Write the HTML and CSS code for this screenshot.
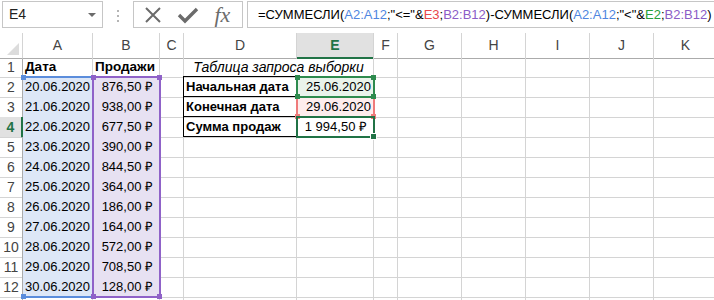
FILE: index.html
```html
<!DOCTYPE html>
<html>
<head>
	<meta charset="utf-8">
	<title>СУММЕСЛИ по датам</title>
	<link rel="stylesheet" href="styles.css">
</head>
<body>
	<div class="fbar">
		<div class="namebox">E4<span class="drop"></span></div>
		<div class="dots"><i></i><i></i><i></i></div>
		<div class="btns">
			<svg width="18" height="18" viewBox="0 0 18 18"><path d="M2 2 L16 16 M16 2 L2 16" stroke="#6b6b6b" stroke-width="2" fill="none"/></svg>
			<svg width="22" height="18" viewBox="0 0 22 18"><path d="M2 9 L8 15 L20 3" stroke="#6b6b6b" stroke-width="3.4" fill="none"/></svg>
			<span class="fx">fx</span>
		</div>
		<div class="formula">=СУММЕСЛИ(<span class="rb">A2:A12</span>;"&lt;="&amp;<span class="rr">E3</span>;<span class="rp">B2:B12</span>)-СУММЕСЛИ(<span class="rb">A2:A12</span>;"&lt;"&amp;<span class="rg">E2</span>;<span class="rp">B2:B12</span>)</div>
	</div>

	<div class="sheet">
		<div class="row head">
			<div class="corner"></div>
			<div>A</div><div>B</div><div>C</div><div>D</div><div class="sel">E</div><div>F</div><div>G</div><div>H</div><div>I</div><div>J</div><div>K</div>
		</div>
		<div class="row">
			<div class="rh">1</div><div class="b">Дата</div><div class="b">Продажи</div><div></div><div class="title">Таблица запроса выборки</div><div></div><div></div><div></div><div></div><div></div><div></div>
		</div>
		<div class="row">
			<div class="rh">2</div><div class="num fa">20.06.2020</div><div class="num fb cur">876,50 ₽</div><div></div><div class="lbl">Начальная дата</div><div class="num fe2 val">25.06.2020</div><div></div><div></div><div></div><div></div><div></div><div></div>
		</div>
		<div class="row">
			<div class="rh">3</div><div class="num fa">21.06.2020</div><div class="num fb cur">938,00 ₽</div><div></div><div class="lbl">Конечная дата</div><div class="num fe3 val">29.06.2020</div><div></div><div></div><div></div><div></div><div></div><div></div>
		</div>
		<div class="row">
			<div class="rh sel">4</div><div class="num fa">22.06.2020</div><div class="num fb cur">677,50 ₽</div><div></div><div class="lbl">Сумма продаж</div><div class="num cur val">1 994,50 ₽</div><div></div><div></div><div></div><div></div><div></div><div></div>
		</div>
		<div class="row">
			<div class="rh">5</div><div class="num fa">23.06.2020</div><div class="num fb cur">390,00 ₽</div><div></div><div></div><div></div><div></div><div></div><div></div><div></div><div></div><div></div>
		</div>
		<div class="row">
			<div class="rh">6</div><div class="num fa">24.06.2020</div><div class="num fb cur">844,50 ₽</div><div></div><div></div><div></div><div></div><div></div><div></div><div></div><div></div><div></div>
		</div>
		<div class="row">
			<div class="rh">7</div><div class="num fa">25.06.2020</div><div class="num fb cur">364,00 ₽</div><div></div><div></div><div></div><div></div><div></div><div></div><div></div><div></div><div></div>
		</div>
		<div class="row">
			<div class="rh">8</div><div class="num fa">26.06.2020</div><div class="num fb cur">186,00 ₽</div><div></div><div></div><div></div><div></div><div></div><div></div><div></div><div></div><div></div>
		</div>
		<div class="row">
			<div class="rh">9</div><div class="num fa">27.06.2020</div><div class="num fb cur">164,00 ₽</div><div></div><div></div><div></div><div></div><div></div><div></div><div></div><div></div><div></div>
		</div>
		<div class="row">
			<div class="rh">10</div><div class="num fa">28.06.2020</div><div class="num fb cur">572,00 ₽</div><div></div><div></div><div></div><div></div><div></div><div></div><div></div><div></div><div></div>
		</div>
		<div class="row">
			<div class="rh">11</div><div class="num fa">29.06.2020</div><div class="num fb cur">708,50 ₽</div><div></div><div></div><div></div><div></div><div></div><div></div><div></div><div></div><div></div>
		</div>
		<div class="row">
			<div class="rh">12</div><div class="num fa">30.06.2020</div><div class="num fb cur">128,00 ₽</div><div></div><div></div><div></div><div></div><div></div><div></div><div></div><div></div><div></div>
		</div>
		<div class="row">
			<div class="rh"></div><div></div><div></div><div></div><div></div><div></div><div></div><div></div><div></div><div></div><div></div><div></div>
		</div>

		<!-- range highlights drawn over the grid -->
		<div class="tbl"></div>
		<div class="rng blue"><i class="h tl"></i><i class="h bl"></i></div>
		<div class="rng purple"><i class="h tl"></i><i class="h tr"></i><i class="h bl"></i><i class="h br"></i></div>
		<div class="rng red"><i class="h bl"></i><i class="h br"></i></div>
		<div class="rng green"><i class="h tl"></i><i class="h tr"></i><i class="h bl"></i><i class="h br"></i></div>
		<div class="active"><i class="fill"></i></div>
	</div>
</body>
</html>
```

FILE: styles.css
```css
body {
	margin: 0;
	background: #fff;
	font-family: "Liberation Sans", Arial, sans-serif;
	color: #000;
	overflow: hidden;
	width: 714px;
	height: 300px;
}

/* formula bar */
.fbar {
	display: flex;
	align-items: flex-start;
	height: 33px;
	padding-top: 1px;
	box-sizing: border-box;
}
.namebox {
	position: relative;
	margin-left: 2px;
	width: 101px;
	height: 27px;
	box-sizing: border-box;
	border: 1px solid #c6c6c6;
	font-size: 14px;
	line-height: 25px;
	padding-left: 6px;
	color: #222;
}
.drop {
	position: absolute;
	right: 6px;
	top: 11px;
	border-left: 4px solid transparent;
	border-right: 4px solid transparent;
	border-top: 4px solid #6b6b6b;
}
.dots {
	width: 30px;
	display: flex;
	flex-direction: column;
	align-items: center;
	gap: 3px;
	padding-top: 9px;
}
.dots i {
	width: 2px;
	height: 2px;
	background: #b5b5b5;
}
.btns {
	width: 110px;
	height: 27px;
	box-sizing: border-box;
	border: 1px solid #c6c6c6;
	display: flex;
	align-items: center;
	justify-content: space-around;
	padding: 0 4px 0 2px;
}
.fx {
	font-family: "Liberation Serif", serif;
	font-style: italic;
	font-size: 22px;
	color: #6b6b6b;
	line-height: 24px;
}
.formula {
	margin-left: 4px;
	flex: 1;
	height: 27px;
	box-sizing: border-box;
	border: 1px solid #c6c6c6;
	border-right: none;
	font-size: 13px;
	line-height: 25px;
	padding-left: 10px;
	white-space: nowrap;
	overflow: hidden;
}
.rb { color: #4f86e0; }
.rr { color: #e8474a; }
.rp { color: #8b5cc7; }
.rg { color: #26a03a; }

/* grid */
.sheet {
	position: relative;
}
.row {
	display: grid;
	grid-template-columns: 23px 70px 67px 24px 113px 77px 24px 64px 64px 64px 64px 64px;
	height: 20px;
}
.row > div {
	box-sizing: border-box;
	border-right: 1px solid #d4d4d4;
	border-bottom: 1px solid #d4d4d4;
	font-size: 13px;
	line-height: 20px;
	padding: 0 2px;
	white-space: nowrap;
}
.row.head {
	height: 24px;
}
.row.head > div {
	border-bottom-color: #ababab;
	text-align: center;
	line-height: 24px;
	color: #444;
	font-size: 14px;
}
.row .rh {
	border-right-color: #ababab;
	text-align: center;
	color: #444;
	font-size: 14px;
	padding: 0;
}
.row.head > .sel {
	background: #e1e1e1;
	color: #217346;
	font-weight: bold;
	border-bottom: 2px solid #217346;
}
.row .rh.sel {
	background: #e1e1e1;
	color: #217346;
	font-weight: bold;
	border-right: 2px solid #217346;
}
.corner {
	position: relative;
}
.corner::after {
	content: "";
	position: absolute;
	right: 3px;
	bottom: 3px;
	border-left: 12px solid transparent;
	border-bottom: 12px solid #dcdcdc;
}
.b {
	font-weight: bold;
	font-size: 13.5px !important;
}
.title {
	grid-column: span 2;
	font-style: italic;
	text-align: center;
	font-size: 14px !important;
}
.lbl {
	font-weight: bold;
}
.num {
	text-align: right;
}
.cur {
	padding-right: 6px !important;
}
.val {
	padding-right: 3px;
}
.fa { background: #dde7f7; }
.fb { background: #e7e1f2; }
.fe2 { background: #e9f3eb; }
.fe3 { background: #fdeded; }

/* black table border D2:E4 */
.tbl {
	position: absolute;
	left: 183px;
	top: 43px;
	width: 191px;
	height: 61px;
	box-sizing: border-box;
	border: 1px solid #000;
	background:
		linear-gradient(#000, #000) 0 19px / 100% 1px no-repeat,
		linear-gradient(#000, #000) 0 39px / 100% 1px no-repeat,
		linear-gradient(#000, #000) 112px 0 / 1px 100% no-repeat;
}

/* formula reference ranges */
.rng {
	position: absolute;
	box-sizing: border-box;
}
.rng .h {
	position: absolute;
	width: 5px;
	height: 5px;
}
.h.tl { left: -3px; top: -3px; }
.h.tr { right: -3px; top: -3px; }
.h.bl { left: -3px; bottom: -3px; }
.h.br { right: -3px; bottom: -3px; }
.blue {
	left: 22px;
	top: 43px;
	width: 72px;
	height: 222px;
	border-top: 2px solid #5b8ddc;
	border-bottom: 2px solid #5b8ddc;
}
.blue .h { background: #5b8ddc; }
.blue .h.tl, .blue .h.bl { left: -1px; }
.purple {
	left: 92px;
	top: 43px;
	width: 69px;
	height: 222px;
	border: 2px solid #8f62c8;
}
.purple .h { background: #8f62c8; }
.green {
	left: 296px;
	top: 43px;
	width: 79px;
	height: 22px;
	border: 2px solid #2e8b4e;
}
.green .h { background: #2e8b4e; }
.red {
	left: 296px;
	top: 63px;
	width: 79px;
	height: 22px;
	border: 2px solid #ef7b7b;
}
.red .h { background: #ef7b7b; }
.active {
	position: absolute;
	left: 296px;
	top: 83px;
	width: 79px;
	height: 22px;
	box-sizing: border-box;
	border: 2px solid #217346;
}
.fill {
	position: absolute;
	right: -4px;
	bottom: -4px;
	width: 5px;
	height: 5px;
	background: #217346;
	border: 1px solid #fff;
}
```
